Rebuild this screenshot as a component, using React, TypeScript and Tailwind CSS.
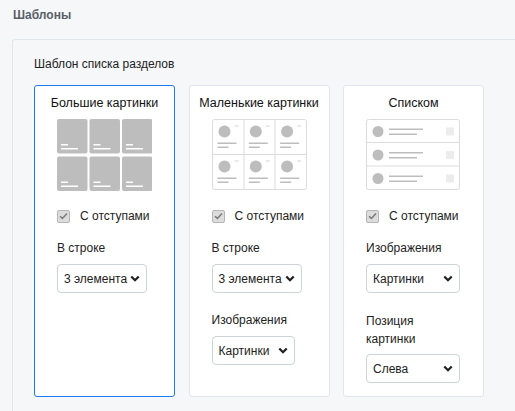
import React from "react";

const font = { fontFamily: '"Liberation Sans", Arial, sans-serif' };

function Chevron() {
  return (
    <svg width="10" height="7" viewBox="0 0 10 7" className="block">
      <path d="M1.3 1.5 L5 5.2 L8.7 1.5" fill="none" stroke="#222" strokeWidth="2.3" />
    </svg>
  );
}

function Select({ label, w }: { label: string; w: string }) {
  return (
    <div className={`${w} h-[29px] flex items-center justify-between pl-[6px] pr-[6px] border border-[#ccd3d9] rounded-[4px] bg-white text-[12px] text-[#222] whitespace-nowrap`}>
      <span>{label}</span>
      <Chevron />
    </div>
  );
}

function Check() {
  return (
    <div className="flex items-center gap-[10px] h-[14px] text-[12px] leading-[14px] text-[#222]">
      <span className="w-[13px] h-[13px] rounded-[2px] bg-[#dcdcdc] border border-[#b5b5b5] flex items-center justify-center">
        <svg width="9" height="8" viewBox="0 0 9 8" className="block">
          <path d="M1 4.2 L3.4 6.4 L8 1.4" fill="none" stroke="#7a7a7a" strokeWidth="1.5" />
        </svg>
      </span>
      <span>С отступами</span>
    </div>
  );
}

function BigPic() {
  const cells = [];
  for (let r = 0; r < 2; r++)
    for (let c = 0; c < 3; c++) {
      const x = c * 32.5;
      const y = r * 37.5;
      cells.push(
        <g key={`${r}-${c}`}>
          <rect x={x} y={y} width="30.5" height="34.5" rx="2" fill="#bdbdbd" />
          <rect x={x + 4} y={y + 25} width="7" height="1.5" fill="#fff" />
          <rect x={x + 4} y={y + 29} width="17" height="1.5" fill="#fff" />
        </g>
      );
    }
  return (
    <svg width="95" height="72" viewBox="0 0 95 72" className="block">
      {cells}
    </svg>
  );
}

function SmallPic() {
  const cells = [];
  for (let r = 0; r < 2; r++)
    for (let c = 0; c < 3; c++) {
      const x = 0.5 + c * 31.3;
      const y = 0.5 + r * 35;
      cells.push(
        <g key={`${r}-${c}`}>
          <circle cx={x + 12} cy={y + 12} r="6" fill="#bdbdbd" />
          <rect x={x + 22} y={y + 6} width="4" height="1" fill="#d4d4d4" />
          <rect x={x + 5} y={y + 23} width="19" height="1.5" fill="#bdbdbd" />
          <rect x={x + 5} y={y + 27} width="11" height="1.5" fill="#bdbdbd" />
        </g>
      );
    }
  return (
    <svg width="95" height="72" viewBox="0 0 95 72" className="block">
      <rect x="0.5" y="0.5" width="94" height="70" rx="2" fill="#fff" stroke="#dcdcdc" />
      <line x1="32" y1="0.5" x2="32" y2="70.5" stroke="#dcdcdc" />
      <line x1="63" y1="0.5" x2="63" y2="70.5" stroke="#dcdcdc" />
      <line x1="0.5" y1="35.5" x2="94.5" y2="35.5" stroke="#dcdcdc" />
      {cells}
    </svg>
  );
}

function ListPic() {
  const rows = [];
  for (let r = 0; r < 3; r++) {
    const y = 0.5 + r * 23.5;
    rows.push(
      <g key={r}>
        <circle cx="12" cy={y + 12} r="5.5" fill="#bdbdbd" />
        <rect x="23" y={y + 9} width="34" height="1.5" fill="#bdbdbd" />
        <rect x="23" y={y + 14} width="28" height="1.5" fill="#bdbdbd" />
        <rect x="80" y={y + 8} width="8" height="8" rx="1" fill="#ececec" />
      </g>
    );
  }
  return (
    <svg width="95" height="72" viewBox="0 0 95 72" className="block">
      <rect x="0.5" y="0.5" width="93" height="70" rx="2" fill="#fff" stroke="#dcdcdc" />
      <line x1="0.5" y1="23.5" x2="93.5" y2="23.5" stroke="#dcdcdc" />
      <line x1="0.5" y1="47" x2="93.5" y2="47" stroke="#dcdcdc" />
      {rows}
    </svg>
  );
}

function Card({ title, active, pic, children }: { title: string; active?: boolean; pic: React.ReactNode; children: React.ReactNode }) {
  return (
    <div
      className={`w-[141px] h-[312px] shrink-0 bg-white rounded-[3px] border ${active ? "border-[#1a7cf0]" : "border-[#dfe6ec]"} pt-[9px] flex flex-col items-center`}
    >
      <div className="text-[12.5px] leading-[16px] text-[#111] text-center whitespace-nowrap">{title}</div>
      <div className="mt-[8px]">{pic}</div>
      <div className="self-stretch pl-[22px] pr-[8px] mt-[18px] flex flex-col">{children}</div>
    </div>
  );
}

function Label({ children, mt }: { children: React.ReactNode; mt: string }) {
  return <div className={`${mt} text-[12px] leading-[18px] text-[#222] mb-[7px]`}>{children}</div>;
}

export default function App() {
  return (
    <div className="w-[515px] h-[411px] overflow-hidden bg-[#f5f7f9]" style={font}>
      <div className="pl-[13px] pt-[7px] text-[12px] leading-[16px] font-bold text-[#585f66]">Шаблоны</div>
      <div className="ml-[12px] mt-[16px] w-[520px] h-[380px] border border-[#dfe6ec] rounded-[3px] bg-[#f5f7f9] pl-[21px] pt-[16px]">
        <div className="text-[12px] leading-[16px] text-[#222]">Шаблон списка разделов</div>
        <div className="mt-[13px] flex gap-[13.5px]">
          <Card title="Большие картинки" active pic={<BigPic />}>
            <Check />
            <Label mt="mt-[16px]">В строке</Label>
            <Select label="3 элемента" w="w-[90px]" />
          </Card>
          <Card title="Маленькие картинки" pic={<SmallPic />}>
            <Check />
            <Label mt="mt-[16px]">В строке</Label>
            <Select label="3 элемента" w="w-[90px]" />
            <Label mt="mt-[18px]">Изображения</Label>
            <Select label="Картинки" w="w-[83px]" />
          </Card>
          <Card title="Списком" pic={<ListPic />}>
            <Check />
            <Label mt="mt-[16px]">Изображения</Label>
            <Select label="Картинки" w="w-[94px]" />
            <div className="mt-[19px] text-[12px] leading-[18px] text-[#222] mb-[6px] w-[80px]">Позиция картинки</div>
            <Select label="Слева" w="w-[94px]" />
          </Card>
        </div>
      </div>
    </div>
  );
}
